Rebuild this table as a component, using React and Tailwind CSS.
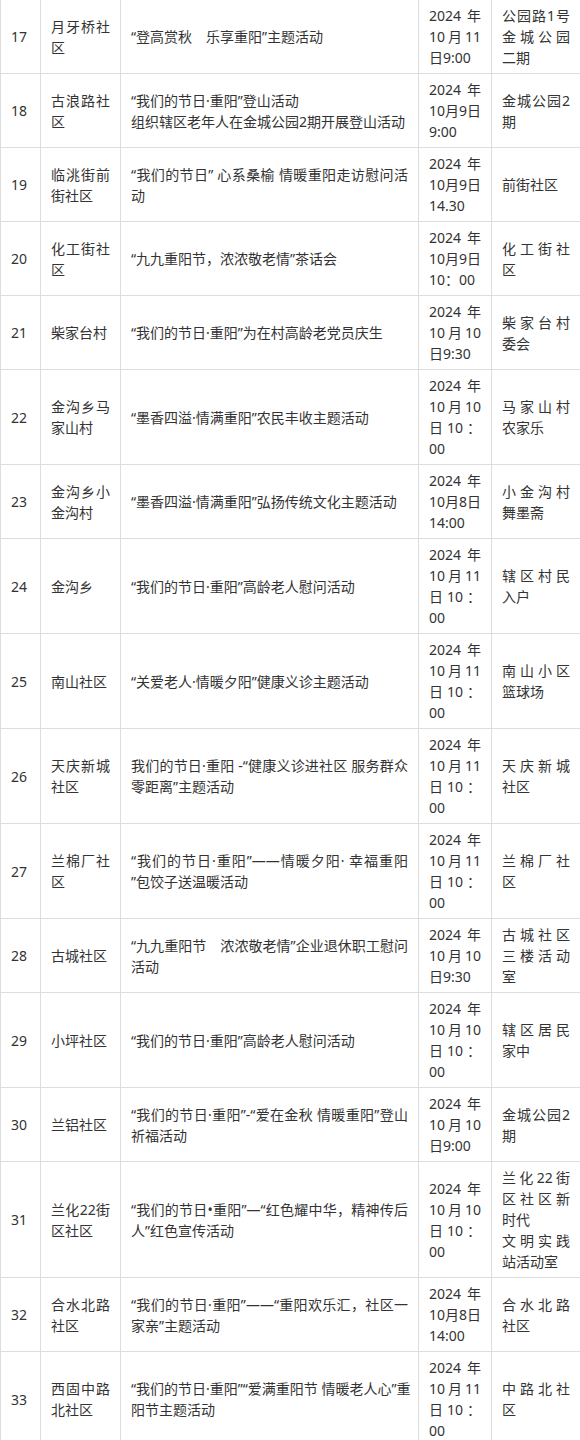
import React from 'react';

// "|" = soft wrap (line gets justified), "\n" = hard break
const ROWS = [
  ['17', '月牙桥社|区', '“登高赏秋　乐享重阳”主题活动', '2024年|10月11|日9:00', '公园路1号|金城公园|二期'],
  ['18', '古浪路社|区', '“我们的节日·重阳”登山活动\n组织辖区老年人在金城公园2期开展登山活动', '2024年|10月9日|9:00', '金城公园2|期'],
  ['19', '临洮街前|街社区', '“我们的节日” 心系桑榆 情暖重阳走访慰问活|动', '2024年|10月9日|14.30', '前街社区'],
  ['20', '化工街社|区', '“九九重阳节，浓浓敬老情”茶话会', '2024年|10月9日|10：00', '化工街社|区'],
  ['21', '柴家台村', '“我们的节日·重阳”为在村高龄老党员庆生', '2024年|10月10|日9:30', '柴家台村|委会'],
  ['22', '金沟乡马|家山村', '“墨香四溢·情满重阳”农民丰收主题活动', '2024年|10月10|日10：|00', '马家山村|农家乐'],
  ['23', '金沟乡小|金沟村', '“墨香四溢·情满重阳”弘扬传统文化主题活动', '2024年|10月8日|14:00', '小金沟村|舞墨斋'],
  ['24', '金沟乡', '“我们的节日·重阳”高龄老人慰问活动', '2024年|10月11|日10：|00', '辖区村民|入户'],
  ['25', '南山社区', '“关爱老人·情暖夕阳”健康义诊主题活动', '2024年|10月11|日10：|00', '南山小区|篮球场'],
  ['26', '天庆新城|社区', '我们的节日·重阳 -“健康义诊进社区 服务群众|零距离”主题活动', '2024年|10月11|日10：|00', '天庆新城|社区'],
  ['27', '兰棉厂社|区', '“我们的节日·重阳”——情暖夕阳· 幸福重阳|”包饺子送温暖活动', '2024年|10月11|日10：|00', '兰棉厂社|区'],
  ['28', '古城社区', '“九九重阳节　浓浓敬老情”企业退休职工慰问|活动', '2024年|10月10|日9:30', '古城社区|三楼活动|室'],
  ['29', '小坪社区', '“我们的节日·重阳”高龄老人慰问活动', '2024年|10月10|日10：|00', '辖区居民|家中'],
  ['30', '兰铝社区', '“我们的节日·重阳”-“爱在金秋 情暖重阳”登山|祈福活动', '2024年|10月10|日9:00', '金城公园2|期'],
  ['31', '兰化22街|区社区', '“我们的节日•重阳”—“红色耀中华，精神传后|人”红色宣传活动', '2024年|10月10|日10：|00', '兰化22街|区社区新|时代\n文明实践|站活动室'],
  ['32', '合水北路|社区', '“我们的节日·重阳”——“重阳欢乐汇，社区一|家亲”主题活动', '2024年|10月8日|14:00', '合水北路|社区'],
  ['33', '西固中路|北社区', '“我们的节日·重阳”“爱满重阳节 情暖老人心”重|阳节主题活动', '2024年|10月11|日10：|00', '中路北社|区'],
];

function Cell({ text }) {
  const paras = text.split('\n');
  return (
    <td className="border border-[#dedede] px-[10px] py-[5px] align-middle">
      {paras.map((p, i) => {
        const lines = p.split('|');
        return lines.map((l, j) => (
          <div
            key={i + '-' + j}
            className={
              'whitespace-pre ' +
              (j < lines.length - 1 ? 'text-justify [text-align-last:justify]' : 'text-left')
            }
          >
            {l}
          </div>
        ));
      })}
    </td>
  );
}

export default function App() {
  return (
    <div className="w-[580px] overflow-hidden bg-white">
      <table
        className="-mt-px w-[580px] table-fixed border-collapse text-[14px] leading-[21px] text-[#333]"
        style={{ fontFamily: '"Noto Sans", "Noto Sans CJK SC", sans-serif' }}
        lang="zh-CN"
      >
        <colgroup>
          <col className="w-[40px]" />
          <col className="w-[80px]" />
          <col className="w-[298px]" />
          <col className="w-[73px]" />
          <col className="w-[89px]" />
        </colgroup>
        <tbody>
          {ROWS.map(r => (
            <tr key={r[0]}>
              {r.map((c, k) => <Cell key={k} text={c} />)}
            </tr>
          ))}
        </tbody>
      </table>
    </div>
  );
}
